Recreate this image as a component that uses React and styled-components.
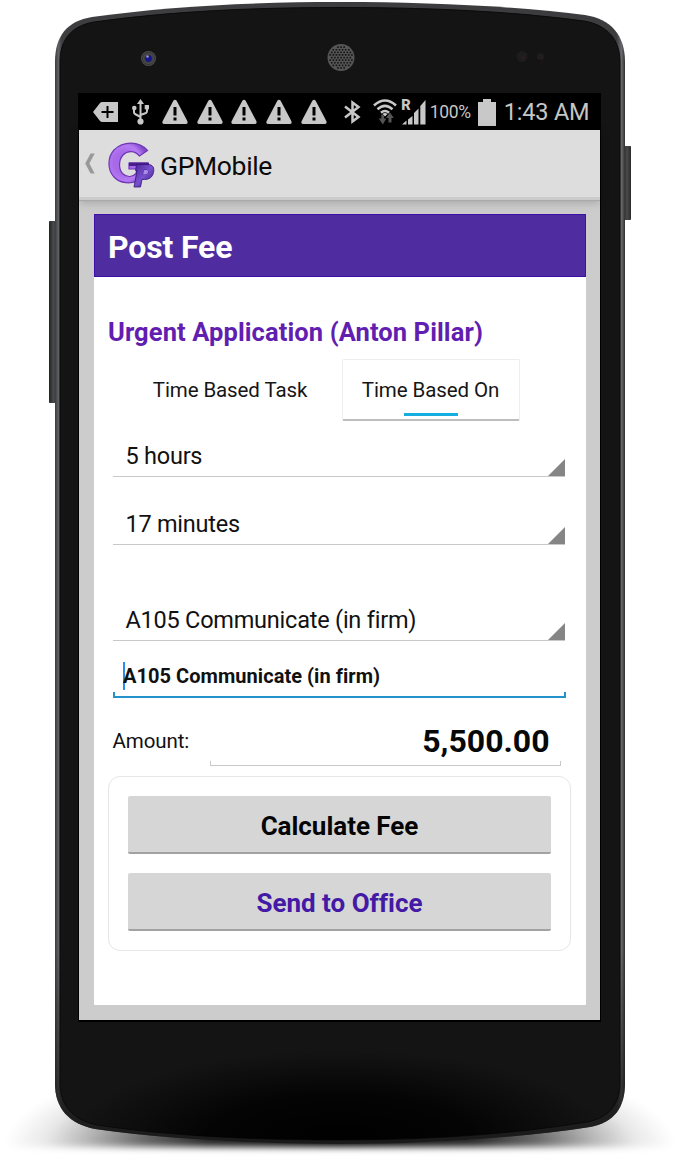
import React from "react";
import styled, { createGlobalStyle } from "styled-components";

const GlobalStyle = createGlobalStyle`
  * { box-sizing: border-box; }
  body { margin: 0; background: #fff; font-family: Roboto, "Liberation Sans", sans-serif; color: #111; }
`;

const Phone = styled.main`
  position: relative;
  width: 680px;
  height: 1160px;
  padding: 94px 80px 140px 79px;
  overflow: hidden;
`;

const PhoneArt = styled.svg`
  position: absolute;
  inset: 0;
`;

const Screen = styled.section`
  position: relative;
  display: flex;
  flex-direction: column;
  height: 926px;
  background: #ccc;
`;

const StatusBar = styled.div`
  display: flex;
  align-items: center;
  height: 36px;
  flex: none;
  padding-left: 14px;
  background: #000;
  color: #c6c6c6;
  svg { flex: none; display: block; }
`;

const Warnings = styled.div`
  display: flex;
  gap: 8.7px;
  margin: 0 17px 0 13px;
`;

const BatteryText = styled.span`
  width: 52px;
  padding-left: 4px;
  font-size: 17.5px;
  line-height: 36px;
  letter-spacing: -0.3px;
  white-space: nowrap;
`;

const Clock = styled.span`
  margin-left: 8px;
  font-size: 23.5px;
  line-height: 36px;
  letter-spacing: -0.2px;
  white-space: nowrap;
`;

const ActionBar = styled.header`
  display: flex;
  align-items: center;
  height: 70px;
  flex: none;
  padding-left: 6px;
  background: #ddd;
  border-bottom: 3px solid #cbcbcb;
  box-shadow: 0 1px 0 #a9a9a9, 0 2px 9px rgba(0, 0, 0, 0.22);
  svg { flex: none; }
`;

const AppName = styled.span`
  margin-left: 5px;
  padding-top: 3px;
  font-size: 26.5px;
  letter-spacing: -0.35px;
  color: #0b0b0b;
`;

const Panel = styled.article`
  display: flex;
  flex-direction: column;
  width: 492px;
  height: 791px;
  margin: 14px 0 0 14.5px;
  background: #fff;
`;

const PanelTitle = styled.h1`
  margin: 0;
  height: 63px;
  flex: none;
  padding: 2px 13.5px 0;
  font-size: 32px;
  font-weight: 700;
  letter-spacing: -0.15px;
  color: #fff;
  background: #4f2da0;
  border: 1px solid #3d10a8;
  line-height: 61px;
`;

const TaskName = styled.h2`
  margin: 35px 0 0 14.5px;
  height: 40px;
  line-height: 40px;
  font-size: 25.5px;
  font-weight: 700;
  letter-spacing: 0.1px;
  color: #621eb0;
  white-space: nowrap;
`;

const Tabs = styled.div`
  display: flex;
  margin: 7px 0 0 34px;
  height: 62px;
`;

const Tab = styled.div`
  display: flex;
  flex-direction: column;
  align-items: center;
  width: ${(p) => (p.$active ? 178 : 205)}px;
  margin-left: ${(p) => (p.$active ? 9 : 0)}px;
  padding-top: 15px;
  font-size: 20.5px;
  line-height: 30px;
  letter-spacing: -0.1px;
  color: #161616;
  border: 1px solid ${(p) => (p.$active ? "#eee" : "transparent")};
  border-bottom: 2px solid ${(p) => (p.$active ? "#bdbdbd" : "transparent")};
  border-radius: 2px;
`;

const TabMark = styled.i`
  width: 54px;
  height: 3px;
  margin-top: 8px;
  background: #16aee0;
`;

const Spinner = styled.div`
  display: flex;
  justify-content: space-between;
  align-items: flex-end;
  width: 452px;
  height: 41px;
  margin: ${(p) => p.$gap}px 0 0 19.4px;
  padding-left: 12.5px;
  border-bottom: 1px solid #c8c8c8;
  font-size: 23.5px;
  line-height: 40px;
  letter-spacing: -0.22px;
  color: #111;
  svg { display: block; }
`;

const Field = styled.div`
  display: flex;
  align-items: center;
  width: ${(p) => p.$width}px;
  border-style: solid;
  border-color: ${(p) => p.$color};
  border-width: 0 ${(p) => p.$line}px ${(p) => p.$line}px;
  border-image: linear-gradient(to top, ${(p) => p.$color} 6px, transparent 6px) 2;
`;

const Description = styled(Field)`
  height: 46px;
  margin: 11px 0 0 19.5px;
  padding: 3px 0 0 8px;
  font-size: 20px;
  font-weight: 700;
  letter-spacing: 0.05px;
  white-space: nowrap;
`;

const Caret = styled.i`
  width: 1.5px;
  height: 28px;
  margin-right: -1.5px;
  background: #2b8cf0;
`;

const AmountRow = styled.div`
  display: flex;
  height: 48px;
  margin: 20px 0 0 19px;
`;

const AmountLabel = styled.label`
  width: 97px;
  line-height: 46px;
  font-size: 20.5px;
  letter-spacing: -0.1px;
`;

const Amount = styled(Field)`
  justify-content: flex-end;
  padding: 0 10px 2px 0;
  font-size: 32px;
  font-weight: 700;
  color: #080808;
`;

const Actions = styled.div`
  display: flex;
  flex-direction: column;
  gap: 19px;
  width: 463px;
  height: 175px;
  margin: 10px 0 0 14.5px;
  padding: 19px 19px 0;
  border: 1px solid #e6e6e6;
  border-radius: 12px;
`;

const Button = styled.button`
  width: 423px;
  height: 58px;
  padding: 4px 0 0;
  border: 0;
  border-bottom: 2px solid #a2a2a2;
  border-radius: 2px;
  background: #d6d6d6;
  font: 700 26px Roboto, sans-serif;
  letter-spacing: -0.03px;
  color: ${(p) => p.$color};
`;

const OUTLINE =
  "M55 62C55 36 67 21 92 17C170 6 255 2 340 2C428 2 512 6 585 15C611 19 625 35 625 62V1083C625 1107 615 1122 590 1127C510 1139 426 1144 340 1144C252 1144 168 1139 95 1129C69 1124 55 1108 55 1084Z";
const FACE =
  "M60 62C60 40 71 26 94 22C172 11 255 7.500 340 7.500C427 7.500 510 11 584 21C607 25 620 39 620 62V1083C620 1104 609 1118 587 1122C508 1135 425 1140 340 1140C253 1140 170 1136 97 1125C73 1120 60 1105 60 1084Z";

function PhoneBody() {
  const holes = [];
  for (let r = -5; r <= 5; r++)
    for (let c = -5; c <= 5; c++) {
      const x = c * 3.1 + (r % 2 ? 1.55 : 0);
      const y = r * 2.6;
      if (x * x + y * y < 125) holes.push([341 + x, 57.5 + y]);
    }
  return (
    <PhoneArt width="680" height="1160" viewBox="0 0 680 1160">
      <defs>
        <linearGradient id="rim" x1="55" x2="625" y1="0" y2="0" gradientUnits="userSpaceOnUse">
          <stop offset="0" stopColor="#3a3b3d" />
          <stop offset="0.006" stopColor="#606164" />
          <stop offset="0.012" stopColor="#3e3e40" />
          <stop offset="0.985" stopColor="#3c3c3e" />
          <stop offset="0.994" stopColor="#68686c" />
          <stop offset="1" stopColor="#303030" />
        </linearGradient>
        <linearGradient id="key" x1="0" x2="1" y1="0" y2="0">
          <stop offset="0" stopColor="#222" />
          <stop offset="0.5" stopColor="#4a4b4c" />
          <stop offset="1" stopColor="#292929" />
        </linearGradient>
        <linearGradient id="rimFade" x1="0" x2="0" y1="950" y2="1140" gradientUnits="userSpaceOnUse">
          <stop offset="0" stopColor="#1c1c1c" stopOpacity="0" />
          <stop offset="1" stopColor="#161616" stopOpacity="0.9" />
        </linearGradient>
        <radialGradient id="dark" cx="0" cy="0" r="1" gradientUnits="userSpaceOnUse" gradientTransform="translate(340 1140) scale(270 90)">
          <stop offset="0" stopColor="#000" />
          <stop offset="0.5" stopColor="#000" stopOpacity="0.8" />
          <stop offset="1" stopColor="#000" stopOpacity="0" />
        </radialGradient>
        <radialGradient id="ground" cx="0" cy="0" r="1" gradientUnits="userSpaceOnUse" gradientTransform="translate(340 1148) scale(335 100)">
          <stop offset="0" stopColor="#000" />
          <stop offset="0.4" stopColor="#000" stopOpacity="0.85" />
          <stop offset="0.6" stopColor="#000" stopOpacity="0.58" />
          <stop offset="0.75" stopColor="#000" stopOpacity="0.3" />
          <stop offset="0.88" stopColor="#000" stopOpacity="0.09" />
          <stop offset="1" stopColor="#000" stopOpacity="0" />
        </radialGradient>
        <filter id="soft" x="-10%" y="-20%" width="120%" height="150%">
          <feGaussianBlur stdDeviation="3.5" />
        </filter>
        <radialGradient id="lens">
          <stop offset="0.3" stopColor="#262626" />
          <stop offset="0.65" stopColor="#4c4c4c" />
          <stop offset="0.8" stopColor="#353535" />
          <stop offset="1" stopColor="#575757" />
        </radialGradient>
      </defs>
      <path d="M0 1040H680V1147H0Z" fill="url(#ground)" filter="url(#soft)" />
      <rect x="49" y="221" width="9" height="182" rx="1" fill="url(#key)" />
      <rect x="623" y="146" width="8" height="74" rx="1" fill="url(#key)" />
      <path d={OUTLINE} fill="url(#rim)" />
      <path d={OUTLINE} fill="url(#rimFade)" />
      <path d={FACE} fill="#141414" stroke="#0b0b0b" />
      <path d={FACE} fill="url(#dark)" />
      <rect x="78" y="93" width="523" height="929" fill="#000" />
      <circle cx="148.500" cy="58.500" r="7.500" fill="url(#lens)" />
      <circle cx="148.500" cy="58.500" r="3.200" fill="#15158f" />
      <circle cx="147.500" cy="56.500" r="1.300" fill="#9a9ab0" />
      <circle cx="341" cy="57.500" r="13.500" fill="#555" />
      {holes.map(([x, y], i) => (
        <rect key={i} x={x - 0.8} y={y - 0.8} width="1.700" height="1.700" rx="0.4" fill="#141414" />
      ))}
      <circle cx="522" cy="56.500" r="5.500" fill="#1e1c1c" />
      <circle cx="523" cy="57.500" r="1" fill="#421d14" />
      <circle cx="540.500" cy="56.500" r="3.500" fill="#211d1d" />
    </PhoneArt>
  );
}

const TagIcon = () => (
  <svg width="25" height="20" viewBox="0 0 25 20">
    <path d="M0 10L7 1Q8 0 9 0H25V20H9Q8 20 7 19Z" fill="#c8c8c8" />
    <path d="M14.500 4V16M8.500 10H20.500" stroke="#000" strokeWidth="2" />
  </svg>
);

const UsbIcon = () => (
  <svg width="17" height="26" viewBox="0 0 17 26" fill="none" stroke="#c8c8c8" strokeWidth="2">
    <path d="M8.500 22V4M8.500 18L3 15Q2 14.500 2 13V9M8.500 16L14 14Q15 13.500 15 12V8" />
    <path d="M8.500 0L12 5H5Z" fill="#c8c8c8" stroke="none" />
    <circle cx="8.500" cy="22.500" r="3.100" fill="#c8c8c8" stroke="none" />
    <circle cx="2.300" cy="9" r="2.300" fill="#c8c8c8" stroke="none" />
    <path d="M12.700 6H17V10.300H12.700Z" fill="#c8c8c8" stroke="none" />
  </svg>
);

const WarningIcon = () => (
  <svg width="26" height="26" viewBox="0 0 26 26">
    <path d="M11.200 2Q13 -.5 14.800 2L25.300 22Q26.400 25 23.500 25H2.500Q-.4 25 .7 22Z" fill="#c8c8c8" />
    <path d="M13 8V16.500M13 18.500V21.500" stroke="#000" strokeWidth="3" />
  </svg>
);

const BluetoothIcon = () => (
  <svg width="17" height="24" viewBox="0 0 17 24" fill="none" stroke="#c8c8c8" strokeWidth="2.500">
    <path d="M1 6.500L14.500 17L8.500 21.500V2.500L14.500 7L1 17.500" />
  </svg>
);

const WifiIcon = () => (
  <svg width="24" height="28" viewBox="0 0 24 28" fill="none" stroke="#c8c8c8" strokeWidth="2.600">
    <path d="M1 7.500Q12 -2.500 23 7.500M4.500 11.300Q12 4.500 19.500 11.300M8 14.800Q12 11.200 16 14.800" />
    <path d="M9.500 16L12 18.500L14.500 16Q12 14 9.500 16Z" fill="#c8c8c8" stroke="none" />
    <path d="M8.300 16.500V20.500H5.800L9.800 26.500L13.300 20.500H11V17.500ZM15.500 24.500V20H13L17 14.500L20.800 20H18.500V24.500Z" fill="#555" stroke="none" />
  </svg>
);

const RoamingLabel = styled.span`
  position: absolute;
  left: -0.5px;
  top: -1px;
  font-size: 14.5px;
  font-weight: 900;
  line-height: 14px;
`;

const SignalBox = styled.div`
  position: relative;
  margin-left: 5px;
`;

const SignalIcon = () => (
  <SignalBox>
    <svg width="24" height="25" viewBox="0 0 24 25" fill="#c8c8c8">
      <path d="M0 24.500L4.500 20.500V24.500ZM6 19.500L10.500 16V24.500H6ZM12 13L16.500 8.500V24.500H12ZM18.300 6L23.500 0V24.500H18.300Z" />
    </svg>
    <RoamingLabel>R</RoamingLabel>
  </SignalBox>
);

const BatteryIcon = () => (
  <svg width="18" height="27" viewBox="0 0 18 27">
    <path d="M5 0H13V3H18V27H0V3H5Z" fill="#c8c8c8" />
  </svg>
);

const BackIcon = () => (
  <svg width="10" height="21" viewBox="0 0 10 21">
    <path d="M5.500 .5H9.700L4.400 10.500L9.700 20.500H5.500L.2 10.500Z" fill="#999" />
  </svg>
);

const Logo = () => (
  <svg width="47" height="46" viewBox="0 0 47 46">
    <defs>
      <radialGradient id="logoG" cx="0.4" cy="0.5" r="0.6">
        <stop offset="0.45" stopColor="#a869e8" />
        <stop offset="0.75" stopColor="#b57bf3" />
        <stop offset="1" stopColor="#8149cc" />
      </radialGradient>
      <linearGradient id="logoP" x1="0" x2="1" y1="0" y2="1">
        <stop offset="0" stopColor="#4b249a" />
        <stop offset="0.5" stopColor="#7951ce" />
        <stop offset="1" stopColor="#35157f" />
      </linearGradient>
    </defs>
    <path
      d="M39.500 8.500L31.500 14C27 8.500 19.500 8.300 15 13C10.500 18 10.500 27 14.500 31.500C19 36 25 35 28 31.500L29 27H21V21H39V27L31 38C23 42.500 12 41.500 6 35C-1 27.500-.5 15 6 8C15-1 31-1.500 39.500 8.500Z"
      fill="url(#logoG)"
      stroke="#6f35b6"
      strokeWidth="1.200"
    />
    <path d="M21 20.500H41V24H21Z" fill="#4a1e8e" />
    <path
      d="M28.500 22.500H40C45 22.500 46.500 26 45.500 30.500C44.500 35 41.500 37.500 36.500 37.500H34L32.500 45H26L29 28.500H27.500ZM36 28L35 32.500H37C39 32.500 39.800 31.500 40 30C40.200 28.500 39.500 28 38 28Z"
      fill="url(#logoP)"
      fillRule="evenodd"
      stroke="#34147c"
      strokeWidth="0.800"
    />
    <path d="M36 28L35 32.500H37C39 32.500 39.800 31.500 40 30C40.200 28.500 39.500 28 38 28Z" fill="#a88ae8" />
  </svg>
);

const Corner = () => (
  <svg width="17" height="17" viewBox="0 0 17 17">
    <path d="M17 0V17H0Z" fill="#858585" />
  </svg>
);

const UsbSlot = styled.div`
  margin-left: 14px;
`;

const WifiSlot = styled.div`
  margin-left: 12px;
`;

const LogoSlot = styled.div`
  display: flex;
  margin-left: 13px;
  padding-top: 3px;
`;

export default function App() {
  return (
    <>
      <GlobalStyle />
      <Phone>
        <PhoneBody />
        <Screen>
          <StatusBar>
            <TagIcon />
            <UsbSlot><UsbIcon /></UsbSlot>
            <Warnings>
              {[0, 1, 2, 3, 4].map((i) => <WarningIcon key={i} />)}
            </Warnings>
            <BluetoothIcon />
            <WifiSlot><WifiIcon /></WifiSlot>
            <SignalIcon />
            <BatteryText>100%</BatteryText>
            <BatteryIcon />
            <Clock>1:43 AM</Clock>
          </StatusBar>
          <ActionBar>
            <BackIcon />
            <LogoSlot><Logo /></LogoSlot>
            <AppName>GPMobile</AppName>
          </ActionBar>
          <Panel>
            <PanelTitle>Post Fee</PanelTitle>
            <TaskName>Urgent Application (Anton Pillar)</TaskName>
            <Tabs>
              <Tab>Time Based Task</Tab>
              <Tab $active>Time Based On<TabMark /></Tab>
            </Tabs>
            <Spinner $gap={15}>5 hours<Corner /></Spinner>
            <Spinner $gap={27}>17 minutes<Corner /></Spinner>
            <Spinner $gap={55}>A105 Communicate (in firm)<Corner /></Spinner>
            <Description $width={453} $line={2} $color="#2393cc">
              <Caret />A105 Communicate (in firm)
            </Description>
            <AmountRow>
              <AmountLabel>Amount:</AmountLabel>
              <Amount $width={351} $line={1} $color="#c9c9c9">5,500.00</Amount>
            </AmountRow>
            <Actions>
              <Button $color="#050505">Calculate Fee</Button>
              <Button $color="#4319a5">Send to Office</Button>
            </Actions>
          </Panel>
        </Screen>
      </Phone>
    </>
  );
}
